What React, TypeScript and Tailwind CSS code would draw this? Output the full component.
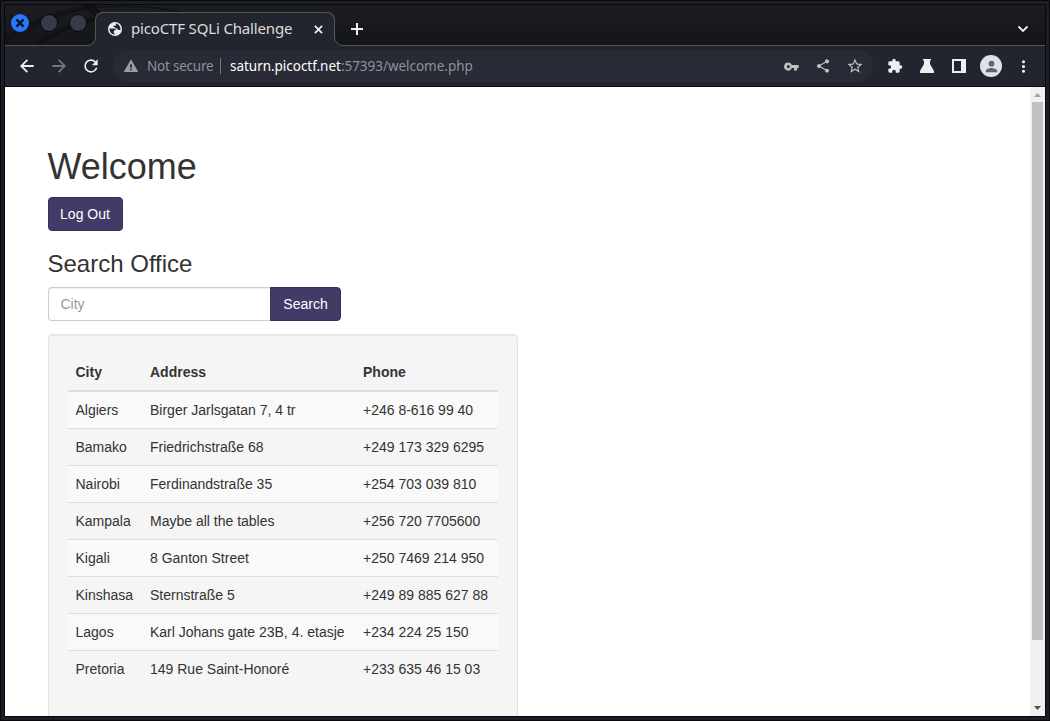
import React from "react";

const rows: [string, string, string][] = [
  ["Algiers", "Birger Jarlsgatan 7, 4 tr", "+246 8-616 99 40"],
  ["Bamako", "Friedrichstraße 68", "+249 173 329 6295"],
  ["Nairobi", "Ferdinandstraße 35", "+254 703 039 810"],
  ["Kampala", "Maybe all the tables", "+256 720 7705600"],
  ["Kigali", "8 Ganton Street", "+250 7469 214 950"],
  ["Kinshasa", "Sternstraße 5", "+249 89 885 627 88"],
  ["Lagos", "Karl Johans gate 23B, 4. etasje", "+234 224 25 150"],
  ["Pretoria", "149 Rue Saint-Honoré", "+233 635 46 15 03"],
];

function Icon({ d, className }: { d: string; className: string }) {
  return (
    <svg viewBox="0 0 24 24" className={className} fill="currentColor">
      <path d={d} />
    </svg>
  );
}

const BACK = "M20 10.8H7.83l5.4-5.39L11.700 3.900l-8.100 8.100 8.100 8.100 1.530-1.510L7.830 13.200H20v-2.400z";
const FORWARD = "M12.300 3.900l-1.530 1.510 5.400 5.390H4v2.400h12.170l-5.400 5.390 1.530 1.510 8.100-8.100z";
const RELOAD =
  "M17.65 6.35A7.958 7.958 0 0 0 12 4a8 8 0 1 0 7.73 10h-2.08A5.99 5.99 0 0 1 12 18c-3.31 0-6-2.69-6-6s2.69-6 6-6c1.66 0 3.14.69 4.22 1.78L13 11h7V4l-2.35 2.35z";
const WARNING = "M1 21h22L12 2 1 21zm12.300-2.500h-2.600v-2.500h2.600v2.500zm0-4h-2.600v-5h2.600v5z";
const KEY =
  "M12.65 9.500A6 6 0 0 0 7 5.500a6.500 6.500 0 1 0 5.650 9H16V18.500h5V14.500h2.500v-5H12.650zM7 14.500a2.500 2.500 0 1 1 0-5 2.500 2.500 0 0 1 0 5z";
const SHARE =
  "M18 16.08c-.76 0-1.44.3-1.96.77L8.91 12.7a3.3 3.3 0 0 0 0-1.4l7.05-4.11A2.99 2.99 0 1 0 15 5c0 .24.04.47.09.7L8.04 9.81a3 3 0 1 0 0 4.38l7.12 4.16a2.92 2.92 0 1 0 2.84-2.27z";
const STAR =
  "M22 9.24l-7.19-.62L12 2 9.19 8.63 2 9.24l5.46 4.73L5.82 21 12 17.27 18.18 21l-1.63-7.03L22 9.24zM12 15.4l-3.76 2.27 1-4.28-3.32-2.88 4.38-.38L12 6.1l1.71 4.04 4.38.38-3.32 2.88 1 4.28L12 15.4z";
const PUZZLE =
  "M20.5 11H19V7a2 2 0 0 0-2-2h-4V3.5a2.5 2.5 0 0 0-5 0V5H4a2 2 0 0 0-2 2v3.8h1.5a2.7 2.7 0 0 1 0 5.4H2V20a2 2 0 0 0 2 2h3.8v-1.5a2.7 2.7 0 0 1 5.4 0V22H17a2 2 0 0 0 2-2v-4h1.5a2.5 2.5 0 0 0 0-5z";
const DOTS =
  "M12 8a2 2 0 1 0 0-4 2 2 0 0 0 0 4zm0 2a2 2 0 1 0 0 4 2 2 0 0 0 0-4zm0 6a2 2 0 1 0 0 4 2 2 0 0 0 0-4z";
const PERSON =
  "M12 12a4 4 0 1 0 0-8 4 4 0 0 0 0 8zm0 2c-2.67 0-8 1.34-8 4v2h16v-2c0-2.66-5.33-4-8-4z";

function TabStrip() {
  return (
    <div className="relative flex h-[41px] shrink-0 bg-linear-to-b from-[#1b1d21] to-[#141519]">
      <svg className="absolute left-0 top-0 h-[40px] w-[200px]" viewBox="0 0 200 40" fill="none">
        <path d="M0 34C30 16 55 6 92 1" stroke="#121317" strokeWidth="5" />
        <path d="M32 40C48 28 68 18 95 13" stroke="#101115" strokeWidth="4" />
        <path d="M78 -2L100 19M84 -2L104 17" stroke="#0e0f13" strokeWidth="2.5" />
        <path d="M95 2C130 0 150 2 175 7" stroke="#101115" strokeWidth="1.5" />
      </svg>
      <div className="relative flex w-[90px] items-start gap-[11px] border-b border-[#55575d] pl-[6px] pt-[9px]">
        <div className="flex size-[18px] items-center justify-center rounded-full bg-[#2777ff]">
          <svg viewBox="0 0 10 10" className="size-[10px]" stroke="#08111f" strokeWidth="2.2">
            <path d="M1.4 1.4l7.2 7.2M8.6 1.4L1.4 8.6" />
          </svg>
        </div>
        <div className="size-[18px] rounded-full border border-[#08090c] bg-[#363b47]" />
        <div className="size-[18px] rounded-full border border-[#08090c] bg-[#363b47]" />
      </div>
      <div className="relative mt-[7px] flex h-[34px] w-[240px] items-center rounded-t-[8px] border-x border-t border-[#55575d] bg-[#23252e] pl-[12px] text-[#dededb]">
        <svg className="absolute -left-[9px] bottom-0 size-[9px]" viewBox="0 0 9 9">
          <path d="M9 0v9H0V8.5A8.5 8.5 0 0 0 8.5 0z" fill="#23252e" />
          <path d="M0 8.5A8.5 8.5 0 0 0 8.5 0" fill="none" stroke="#55575d" />
        </svg>
        <svg className="absolute -right-[9px] bottom-0 size-[9px]" viewBox="0 0 9 9">
          <path d="M0 0v9h9V8.5A8.5 8.5 0 0 1 .5 0z" fill="#23252e" />
          <path d="M9 8.5A8.5 8.5 0 0 1 .5 0" fill="none" stroke="#55575d" />
        </svg>
        <svg viewBox="0 0 16 16" className="mb-[2px] size-[14px]">
          <circle cx="8" cy="8" r="8" fill="#eeeeec" />
          <path
            d="M1.800 7.300H6.500C8 7.300 8.800 8.300 8.800 9.700H6.700V12.500L8 14.200C4.300 14.400 1.400 11.300 1.800 7.300zM9 1.800C12.600 2.300 14.700 5.600 14.200 9.200H12C11 9.200 10.800 8.500 10.800 7.500H9.200C8.200 7.500 7.600 6.700 7.600 5.700H6.300V4.200H9z"
            fill="#23252e"
          />
        </svg>
        <span className="mb-[2px] ml-[9px] w-[180px] whitespace-nowrap text-[15px] tracking-[-0.16px]">
          picoCTF SQLi Challenge
        </span>
        <svg viewBox="0 0 10 10" className="mb-[1px] ml-[3px] size-[9px]" stroke="#eeeeec" strokeWidth="1.9">
          <path d="M1 1l8 8M9 1L1 9" />
        </svg>
      </div>
      <div className="flex flex-1 items-center justify-between border-b border-[#55575d] pl-[16px] pr-[16px] pt-[8px]">
        <svg viewBox="0 0 12 12" className="size-[12px]" stroke="#eeeeec" strokeWidth="2">
          <path d="M6 0v12M0 6h12" />
        </svg>
        <svg viewBox="0 0 12 8" className="h-[8px] w-[12px]" stroke="#eeeeec" strokeWidth="1.8" fill="none">
          <path d="M1.500 1.500L6 6l4.500-4.500" />
        </svg>
      </div>
    </div>
  );
}

function Toolbar() {
  return (
    <div className="flex h-[41px] shrink-0 items-center border-b border-[#0b0c10] bg-[#23252e] text-[#eeeeec]">
      <Icon d={BACK} className="ml-[12px] size-[20px]" />
      <Icon d={FORWARD} className="ml-[12px] size-[20px] text-[#75767a]" />
      <Icon d={RELOAD} className="ml-[12px] size-[20px]" />
      <div className="ml-[12px] flex h-[32px] w-[760px] items-center rounded-full bg-[#282a35] text-[13.500px] text-[#8d929b]">
        <Icon d={WARNING} className="ml-[10px] size-[16px] text-[#9a9ca5]" />
        <span className="ml-[8px] w-[67px] whitespace-nowrap tracking-[-0.220px]">Not secure</span>
        <span className="ml-[6px] h-[16px] w-px bg-[#767982]" />
        <span className="ml-[9px] flex-1 whitespace-nowrap tracking-[-0.030px]">
          <span className="text-white">saturn.picoctf.net</span>:57393/welcome.php
        </span>
        <Icon d={KEY} className="mr-[16px] size-[15px] text-[#bfc0c1]" />
        <Icon d={SHARE} className="mr-[15px] size-[16px] text-[#bfc0c1]" />
        <Icon d={STAR} className="mr-[9px] size-[18px] text-[#bfc0c1]" />
      </div>
      <Icon d={PUZZLE} className="ml-[14px] size-[16px]" />
      <svg viewBox="0 0 16 16" className="ml-[16px] size-[16px]" fill="currentColor">
        <path d="M4 1h8v1.500h-1V6l4 7v2H1v-2l4-7V2.500H4z" />
      </svg>
      <svg viewBox="0 0 14 14" className="ml-[17px] size-[14px]" fill="currentColor">
        <path fillRule="evenodd" d="M0 0h14v14H0zM2 2v10h7V2z" />
      </svg>
      <div className="ml-[14px] flex size-[22px] items-center justify-center rounded-full bg-[#dee1e8] text-[#5b6579]">
        <Icon d={PERSON} className="size-[17px]" />
      </div>
      <Icon d={DOTS} className="ml-[12px] size-[19px]" />
    </div>
  );
}

export default function App() {
  return (
    <div className="h-[721px] w-[1050px] overflow-hidden border border-[#07080c] bg-[#1c1d26] px-[3px] pb-[3px] pt-[3px] font-['Noto_Sans',sans-serif]">
      <div className="flex h-[713px] w-[1042px] flex-col border border-[#07080c]">
        <TabStrip />
        <Toolbar />
        <div className="flex min-h-0 flex-1 bg-white font-['Liberation_Sans',Arial,sans-serif] text-[14px] leading-[20px] text-[#333]">
          <main className="flex-1 overflow-hidden pl-[42.500px] pt-[60px]">
            <h1 className="text-[36px] leading-[40px]">Welcome</h1>
            <button className="mt-[10px] block h-[34px] w-[75px] rounded-[4px] border border-[#392f5a] bg-[#433b67] text-white">
              Log Out
            </button>
            <h3 className="mt-[20px] text-[24px] leading-[26px]">Search Office</h3>
            <div className="mt-[10px] flex h-[34px]">
              <input
                placeholder="City"
                className="w-[222px] rounded-l-[4px] border border-r-0 border-[#ccc] px-[12px] shadow-[inset_0_1px_1px_rgba(0,0,0,0.075)] outline-none placeholder:text-[#999]"
              />
              <button className="w-[71px] rounded-r-[4px] border border-[#392f5a] bg-[#433b67] pl-px text-white">
                Search
              </button>
            </div>
            <div className="mt-[13px] h-[500px] w-[470px] rounded-[4px] border border-[#e3e3e3] bg-[#f5f5f5] p-[19px] shadow-[inset_0_1px_1px_rgba(0,0,0,0.05)]">
              <table className="w-[430px] table-fixed border-collapse text-left">
                <colgroup>
                  <col className="w-[74.500px]" />
                  <col className="w-[213px]" />
                  <col />
                </colgroup>
                <thead>
                  <tr className="h-[37px] border-b-2 border-[#ddd]">
                    <th className="px-[8px] py-0">City</th>
                    <th className="px-[8px] py-0">Address</th>
                    <th className="px-[8px] py-0">Phone</th>
                  </tr>
                </thead>
                <tbody>
                  {rows.map((row) => (
                    <tr key={row[0]} className="h-[37px] border-t border-[#ddd] first:border-t-2 odd:bg-[#f9f9f9]">
                      {row.map((cell) => (
                        <td key={cell} className="whitespace-nowrap px-[8px] py-0">
                          {cell}
                        </td>
                      ))}
                    </tr>
                  ))}
                </tbody>
              </table>
            </div>
          </main>
          <div className="flex w-[15px] flex-col items-center bg-[#f1f1f1] pt-[6px]">
            <svg viewBox="0 0 7 4" className="h-[4px] w-[7px]" fill="#a3a3a3">
              <path d="M3.500 0L7 4H0z" />
            </svg>
            <div className="mt-[5px] h-[538px] w-[11px] bg-[#c1c1c1]" />
            <svg viewBox="0 0 7 4" className="mt-[66px] h-[4px] w-[7px]" fill="#505050">
              <path d="M0 0h7L3.500 4z" />
            </svg>
          </div>
        </div>
      </div>
    </div>
  );
}
